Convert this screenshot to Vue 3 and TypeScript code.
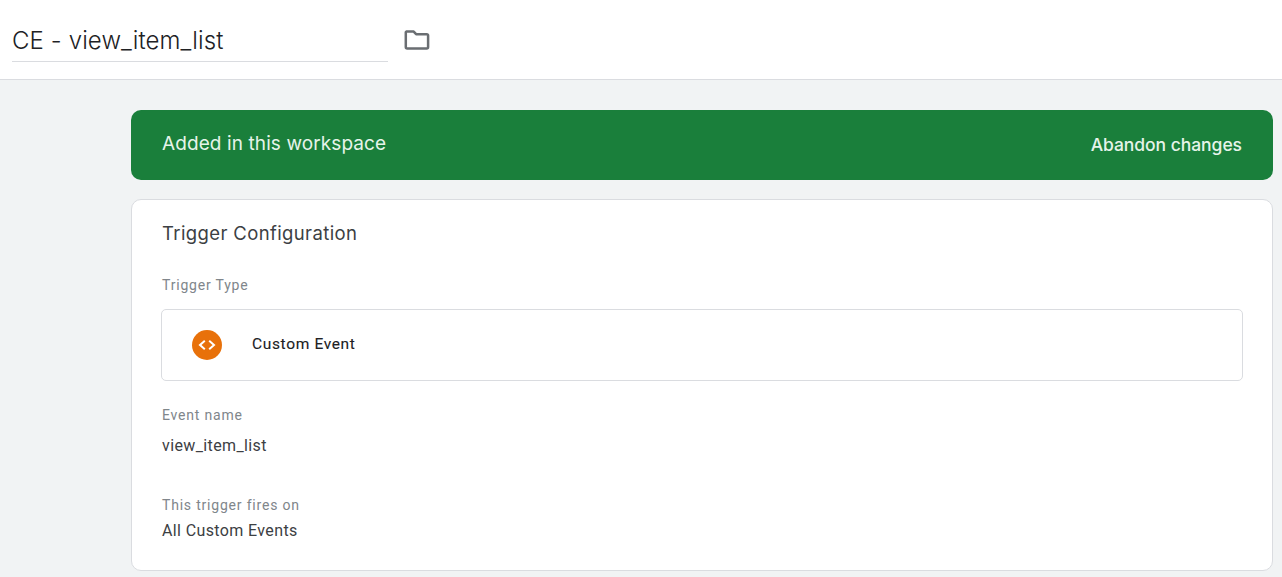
<script setup lang="ts">
const title = 'CE - view_item_list'
</script>

<template>
  <div class="page">
    <header class="topbar">
      <div class="name">{{ title }}</div>
      <svg class="folder" viewBox="0 0 26 22" width="26" height="22" aria-hidden="true">
        <path d="M2.3 2.6h7.4l2.4 2.6h10.6a1.4 1.4 0 0 1 1.4 1.4v11.4a1.4 1.4 0 0 1-1.4 1.4H3.2a1.4 1.4 0 0 1-1.4-1.4V3.1z" fill="none" stroke="#6a6e72" stroke-width="2.5" stroke-linejoin="round"/>
      </svg>
    </header>
    <main class="content">
      <section class="banner">
        <span class="banner-title">Added in this workspace</span>
        <span class="banner-action">Abandon changes</span>
      </section>
      <section class="card">
        <h2 class="card-title">Trigger Configuration</h2>
        <div class="label type-label">Trigger Type</div>
        <div class="type-box">
          <span class="type-icon">
            <svg viewBox="0 0 30 30" width="30" height="30" aria-hidden="true">
              <path d="M12.8 10.8 8 15l4.8 4.2M17.2 10.8 22 15l-4.8 4.2" fill="none" stroke="#fff" stroke-width="2"/>
            </svg>
          </span>
          <span class="type-name">Custom Event</span>
        </div>
        <div class="label event-label">Event name</div>
        <div class="value event-value">view_item_list</div>
        <div class="label fires-label">This trigger fires on</div>
        <div class="value fires-value">All Custom Events</div>
      </section>
    </main>
  </div>
</template>

<style scoped>
.page {
  width: 1282px;
  height: 577px;
  overflow: hidden;
  background: #f1f3f4;
  font-family: Roboto, "Liberation Sans", sans-serif;
}
.topbar {
  box-sizing: border-box;
  height: 80px;
  background: #fff;
  border-bottom: 1px solid #dadce0;
  padding: 20px 0 0 12px;
  display: flex;
  align-items: flex-start;
}
.name {
  box-sizing: border-box;
  width: 376px;
  height: 42px;
  border-bottom: 1px solid #dadce0;
  font-family: Inter, "Open Sans", sans-serif;
  font-size: 24px;
  font-weight: 300;
  line-height: 41px;
  letter-spacing: 0.11px;
  color: #202124;
}
.folder {
  margin: 9px 0 0 16px;
}
.content {
  padding: 30px 9px 0 131px;
  display: flex;
  flex-direction: column;
  gap: 19px;
}
.banner {
  box-sizing: border-box;
  height: 70px;
  background: #1a7f3b;
  border-radius: 10px;
  padding: 0 31px;
  display: flex;
  align-items: center;
  justify-content: space-between;
  color: #e6f4ea;
  font-family: Inter, "Open Sans", sans-serif;
}
.banner-title {
  font-size: 19px;
  font-weight: 400;
  letter-spacing: 0.1px;
  margin-top: -3px;
}
.banner-action {
  font-size: 17.5px;
  font-weight: 500;
  letter-spacing: -0.05px;
  margin-top: -2px;
}
.card {
  box-sizing: border-box;
  height: 372px;
  background: #fff;
  border: 1px solid #dadce0;
  border-radius: 10px;
  padding: 0 29px 0 30px;
  display: flex;
  flex-direction: column;
}
.card-title {
  margin: 21px 0 0;
  font-family: Inter, "Open Sans", sans-serif;
  font-size: 18.5px;
  line-height: 24px;
  font-weight: 400;
  letter-spacing: 0.38px;
  color: #3c4043;
}
.label {
  font-size: 14px;
  line-height: 20px;
  letter-spacing: 0.8px;
  color: #80868b;
}
.value {
  font-size: 16px;
  line-height: 20px;
  letter-spacing: 0.38px;
  color: #3c4043;
}
.type-label {
  margin-top: 30px;
}
.type-box {
  box-sizing: border-box;
  height: 72px;
  margin: 14px 0 0 -1px;
  border: 1px solid #dadce0;
  border-radius: 5px;
  padding-left: 30px;
  display: flex;
  align-items: center;
}
.type-icon {
  width: 30px;
  height: 30px;
  border-radius: 50%;
  background: #e8710a;
  display: flex;
}
.type-name {
  margin: -2px 0 0 30px;
  font-size: 15.5px;
  font-weight: 400;
  letter-spacing: 0.65px;
  color: #202124;
  -webkit-text-stroke: 0.1px #202124;
}
.event-label {
  margin-top: 24px;
}
.event-value {
  margin-top: 11px;
}
.fires-label {
  margin-top: 39px;
}
.fires-value {
  margin-top: 6px;
}
</style>
